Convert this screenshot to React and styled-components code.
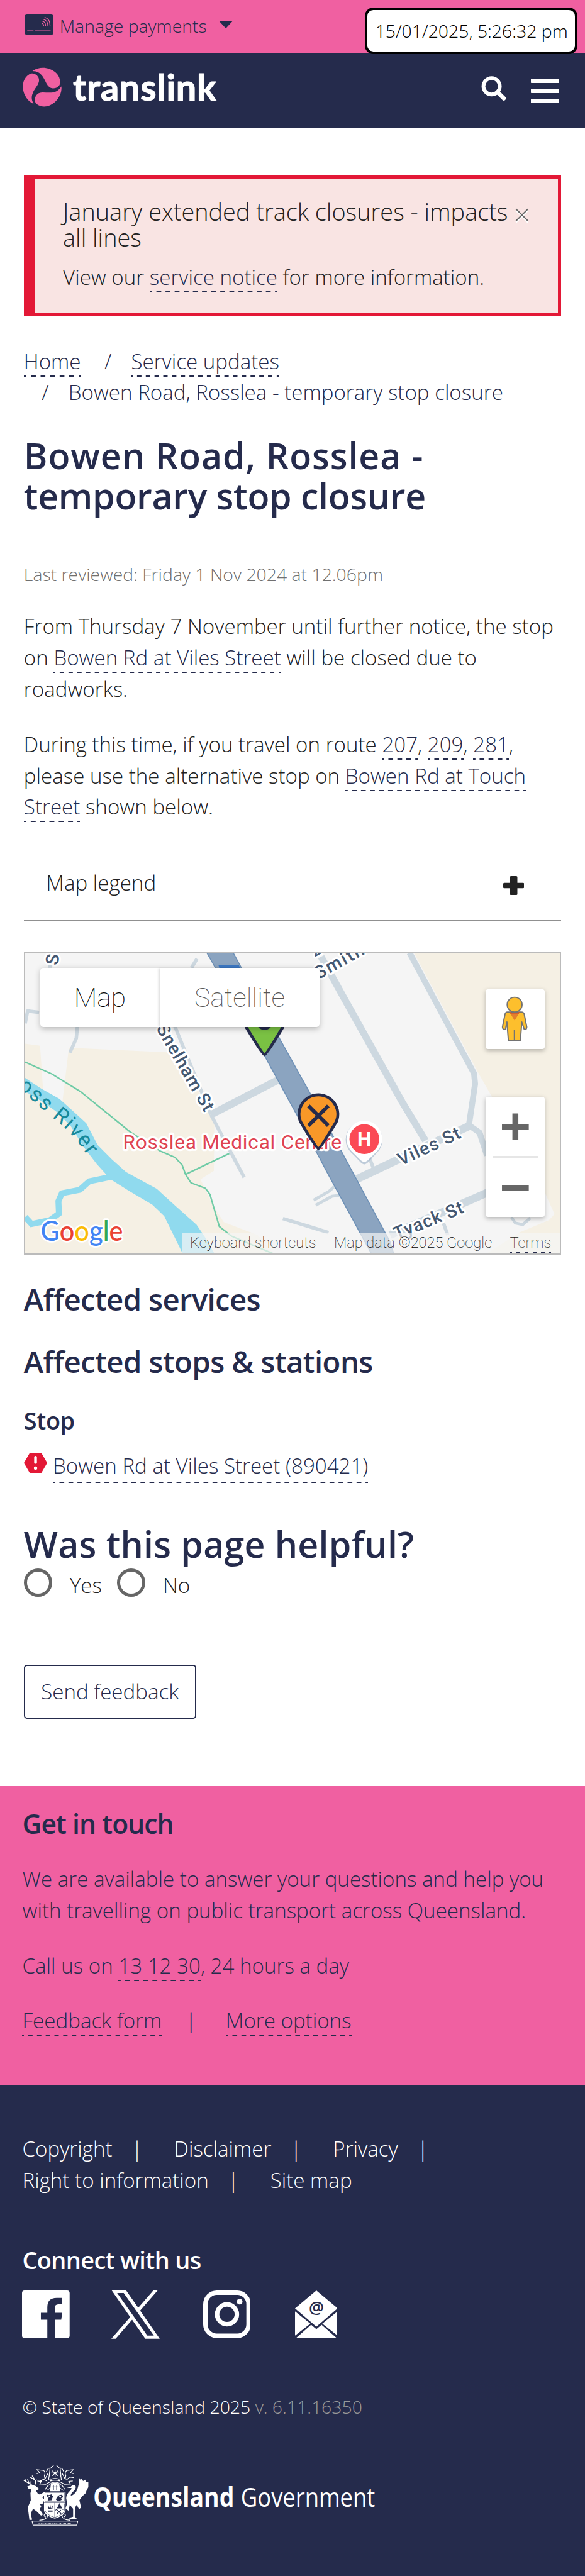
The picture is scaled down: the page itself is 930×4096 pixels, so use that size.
import React from "react";
import styled, { createGlobalStyle, css } from "styled-components";

const navy = "#252b4c";
const pink = "#f060a1";
const red = "#e31836";

/* 1rem is 100 units of a 1179-unit wide layout. */
const Global = createGlobalStyle`
  html { font-size: calc(100vw / 11.79); background: ${navy}; }
  body { margin: 0; font-family: "Open Sans", sans-serif; font-weight: 300; color: #222; }
  *, *::before, *::after { box-sizing: border-box; }
  p, h1, h2, h3, ul, ol { margin: 0; padding: 0; }
  ul, ol { list-style: none; }
  svg { display: block; flex: none; }
`;

const Page = styled.div`
  display: flex;
  flex-direction: column;
  min-height: 100vh;
  background: #fff;
  overflow: hidden;
`;

const bodyText = css`
  font-size: 0.42rem;
  line-height: 0.63rem;
`;

const Link = styled.a`
  color: ${navy};
  padding-bottom: 0.03rem;
  background-image: linear-gradient(90deg, ${navy} 0 25%, transparent 25% 75%, ${navy} 75%);
  background-size: 0.18rem 0.03rem;
  background-position: 0 100%;
  background-repeat: round no-repeat;
  -webkit-box-decoration-break: clone;
  box-decoration-break: clone;
`;

/* ---- top bar and header ---- */

const TopBar = styled.div`
  position: relative;
  display: flex;
  align-items: flex-start;
  height: 1.08rem;
  padding: 0.255rem 0 0 0.495rem;
  background: ${pink};
  color: ${navy};
  font-size: 0.36rem;
  line-height: 0.54rem;
`;

const CardIcon = styled.svg`
  width: 0.585rem;
  height: 0.41rem;
  margin: 0.036rem 0.12rem 0 0;
`;

const Caret = styled.svg`
  width: 0.28rem;
  height: 0.16rem;
  margin: 0.168rem 0 0 0.24rem;
`;

const Timestamp = styled.div`
  position: absolute;
  z-index: 2;
  top: 0.15rem;
  right: 0.15rem;
  padding: 0.15rem 0.145rem 0.155rem 0.155rem;
  border: 0.057rem solid #000;
  border-radius: 0.17rem;
  background: #fff;
  color: #000;
  white-space: nowrap;
`;

const Header = styled.header`
  display: flex;
  align-items: flex-start;
  height: 1.5rem;
  padding: 0 0.52rem 0 0.475rem;
  background: ${navy};
`;

const Logo = styled.svg`
  width: 4rem;
  height: 0.8rem;
  margin: 0.29rem auto 0 0;
  overflow: visible;
`;

const SearchIcon = styled.svg`
  width: 0.52rem;
  height: 0.5rem;
  margin: 0.46rem 0.485rem 0 0;
`;

const MenuIcon = styled.div`
  display: flex;
  flex-direction: column;
  gap: 0.105rem;
  width: 0.57rem;
  margin-top: 0.5rem;
`;

const MenuBar = styled.span`
  height: 0.098rem;
  border-radius: 0.01rem;
  background: #fff;
`;

/* ---- main column ---- */

const Main = styled.main`
  height: 33.43rem;
  padding: 0.96rem 0.48rem 0;
`;

const Alert = styled.section`
  display: flex;
  height: 2.82rem;
  padding: 0.42rem 0.58rem 0 0.56rem;
  border: 0.064rem solid ${red};
  border-left-width: 0.24rem;
  background: #f9e4e3;
  ${bodyText}
`;

const AlertBody = styled.div`
  flex: 1;
`;

const AlertTitle = styled.p`
  margin-bottom: 0.23rem;
  font-size: 0.48rem;
  line-height: 0.51rem;
`;

const CloseIcon = styled.svg`
  width: 0.3rem;
  height: 0.32rem;
  margin: 0.165rem 0 0 0;
`;

const Crumbs = styled.ol`
  display: flex;
  flex-wrap: wrap;
  margin-top: 0.61rem;
  color: ${navy};
  ${bodyText}
`;

const Crumb = styled.li`
  ${(p) =>
    p.$separated &&
    css`
      &::before {
        content: "/";
        margin: 0 0.395rem 0 ${p.$first ? "0.475rem" : "0.36rem"};
      }
    `}
`;

const Heading = styled.h2`
  margin-top: ${(p) => p.$top}rem;
  color: ${(p) => p.$color || navy};
  font-size: ${(p) => p.$size}rem;
  line-height: ${(p) => p.$line}rem;
  font-weight: 600;
  letter-spacing: ${(p) => p.$track || 0}em;
  white-space: nowrap;
`;

const HeadingLine = styled.span`
  display: block;
  letter-spacing: ${(p) => p.$track}em;
`;

const Reviewed = styled.p`
  margin-top: 0.895rem;
  color: #707070;
  font-size: 0.36rem;
  line-height: 0.54rem;
`;

const Paragraph = styled.p`
  margin-top: ${(p) => p.$top}rem;
  ${bodyText}
`;

const Legend = styled.div`
  display: flex;
  justify-content: space-between;
  margin-top: 0.455rem;
  height: 1.53rem;
  padding: 0.44rem 0.75rem 0 0.45rem;
  border-bottom: 0.03rem solid #909090;
  ${bodyText}
`;

const PlusIcon = styled.svg`
  width: 0.42rem;
  height: 0.38rem;
  margin-top: 0.18rem;
`;

/* ---- map ---- */

const MapFrame = styled.div`
  position: relative;
  height: 6.11rem;
  margin-top: 0.61rem;
  border: 0.03rem solid #bbb;
  overflow: hidden;
  font-family: Roboto, sans-serif;
  font-weight: 100;
`;

const MapCanvas = styled.svg`
  width: 100%;
  height: 100%;
  font-weight: 400;
`;

const MapTypes = styled.div`
  position: absolute;
  left: 0.3rem;
  top: 0.305rem;
  display: flex;
  height: 1.2rem;
  border-radius: 0.06rem;
  background: #fff;
  box-shadow: 0 0.03rem 0.12rem rgba(0, 0, 0, 0.25);
  font-size: 0.54rem;
  line-height: 1.2rem;
`;

const MapType = styled.span`
  width: ${(p) => p.$width}rem;
  text-align: center;
  color: ${(p) => (p.$active ? "#000" : "#565656")};
  & + & {
    box-shadow: -0.03rem 0 0.04rem -0.01rem rgba(0, 0, 0, 0.13);
  }
`;

const MapButton = styled.div`
  position: absolute;
  right: 0.3rem;
  top: ${(p) => p.$top}rem;
  display: flex;
  flex-direction: column;
  align-items: center;
  width: 1.2rem;
  height: ${(p) => p.$height}rem;
  border-radius: 0.05rem;
  background: #fff;
  box-shadow: 0 0.03rem 0.1rem rgba(0, 0, 0, 0.25);
`;

const Glyph = styled.svg`
  width: 1.2rem;
  height: 1.2rem;
`;

const ZoomRule = styled.span`
  width: 0.9rem;
  height: 0.03rem;
  background: #e6e6e6;
`;

const Attribution = styled.div`
  position: absolute;
  right: 0;
  bottom: 0;
  display: flex;
  width: 7.61rem;
  height: 0.42rem;
  padding: 0 0.175rem 0 0.155rem;
  justify-content: space-between;
  background: rgba(245, 245, 245, 0.7);
  color: #000;
  font-size: 0.3rem;
  line-height: 0.42rem;
`;

const Terms = styled(Link)`
  color: #222;
  height: 0.42rem;
  padding: 0;
`;

/* ---- stops and feedback ---- */

const StopRow = styled.p`
  display: flex;
  align-items: flex-start;
  margin-top: 0.327rem;
  ${bodyText}
`;

const StopIcon = styled.svg`
  width: 0.47rem;
  height: 0.41rem;
  margin: 0.05rem 0.115rem 0 0;
`;

const Radios = styled.div`
  display: flex;
  gap: 0.304rem;
  height: 2.04rem;
  margin-top: -0.02rem;
  ${bodyText}
`;

const RadioLabel = styled.label`
  display: flex;
  align-items: flex-start;
  gap: 0.356rem;
  padding-top: 0.125rem;
`;

const RadioDot = styled.span`
  width: 0.57rem;
  height: 0.57rem;
  margin-top: -0.03rem;
  border: 0.064rem solid #666;
  border-radius: 50%;
`;

const FeedbackButton = styled.button`
  display: block;
  width: 3.47rem;
  height: 1.08rem;
  padding: 0 0 0.01rem;
  border: 0.03rem solid ${navy};
  border-radius: 0.06rem;
  background: #fff;
  color: ${navy};
  font-family: inherit;
  font-weight: 300;
  ${bodyText}
`;

/* ---- contact band and footer ---- */

const Contact = styled.section`
  height: 6.03rem;
  padding: 0.445rem 0.45rem 0;
  background: ${pink};
  color: ${navy};
`;

const LinkRow = styled.div`
  display: flex;
  margin-top: 0.48rem;
  ${bodyText}
`;

const Divider = styled.span`
  margin: 0 0.585rem 0 0.475rem;
`;

const Footer = styled.footer`
  flex: 1;
  padding: 0.96rem 0.45rem 0;
  background: ${navy};
  color: #fff;
`;

const FooterLinks = styled.ul`
  display: flex;
  flex-wrap: wrap;
  ${bodyText}
`;

const FooterLink = styled.li`
  margin-right: 0.63rem;
  &:not(:last-child)::after {
    content: "|";
    margin-left: 0.385rem;
  }
`;

const Socials = styled.div`
  display: grid;
  grid-template-columns: 1.8rem 1.84rem 1.85rem auto;
  height: 1rem;
  margin-top: 0.315rem;
`;

const Social = styled.svg`
  width: ${(p) => p.$width}rem;
  height: ${(p) => p.$height}rem;
  margin-top: ${(p) => p.$top || 0}rem;
`;

const Copyright = styled.p`
  margin-top: 1.1rem;
  font-size: 0.36rem;
  line-height: 0.54rem;
`;

const Version = styled.span`
  color: #999;
`;

const Crest = styled.svg`
  width: 7.183rem;
  height: 1.267rem;
  margin-top: 0.86rem;
`;

const blade =
  "M55 19C90-6 130-3 155 5C192 17 222 45 223 85C223 110 205 124 180 124C140 120 140 80 112 45C100 30 85 20 55 19Z";

function BrandLogo() {
  return (
    <Logo viewBox="0 0 400 80" role="img">
      <g transform="scale(.3333)" fill={pink}>
        <path d={blade} />
        <path d={blade} transform="rotate(120 116 116)" />
        <path d={blade} transform="rotate(240 116 116)" />
      </g>
      <text
        x="100"
        y="66.5"
        fontFamily="Lato, sans-serif"
        fontWeight="700"
        fontSize="73"
        textLength="289"
        fill="#fff"
        stroke="#fff"
        strokeWidth="1.4"
        strokeLinejoin="round"
      >
        translink
      </text>
    </Logo>
  );
}

const road = { fill: "none", stroke: "#cdd8e0", strokeLinejoin: "round" };
const label = {
  fontWeight: 500,
  fontSize: 36,
  fill: "#445872",
  stroke: "#fff",
  strokeWidth: 8,
  strokeLinejoin: "round",
  paintOrder: "stroke",
};

function Pin({ x, y, fill, children }) {
  return (
    <g transform={`translate(${x} ${y})`}>
      <path
        d="M0 66C-4 66-30 22-36 12A39 39 0 1 1 36 12C30 22 4 66 0 66Z"
        fill={fill}
        stroke={navy}
        strokeWidth="6"
        strokeLinejoin="round"
      />
      {children}
    </g>
  );
}

function StreetMap() {
  return (
    <MapCanvas viewBox="0 0 1077 605" preserveAspectRatio="none" fontFamily="Roboto, sans-serif">
      <rect width="1077" height="605" fill="#f5f5f5" />
      <g fill="#f5f0e4">
        <path d="M783 0L911 239 940 290 1030 440 1047 484 1066 526 1055 538 995 563 930 605H1077V0Z" />
        <path d="M0 183L30 187 37 290 0 270Z" />
        <path d="M88 191L302 201 381 332 380 439 353 456 381 513 400 542 468 568 500 605H0V265L75 300Z" />
      </g>
      <path d="M0 252L32 273 69 294 88 311 123 343 146 387 175 416 203 441 265 475 302 509 345 547 362 572 381 605H317L280 530 256 507 212 481 172 456 144 425 118 391 92 349 62 319 32 298 0 279Z" fill="#90daee" />
      <path d="M172 451L149 456 129 460 110 477 74 484 67 500 68 525 50 538 13 546 0 532" fill="none" stroke="#90daee" strokeWidth="12" />
      <g fill="none" stroke="#6fcba6" strokeWidth="3">
        <path d="M0 220L54 244 111 279 212 361 272 399 302 412 316 427 323 446 334 463 363 474 372 486 391 551 415 570 450 585 498 605" />
        <path d="M323 446L411 404" />
      </g>
      <g {...road}>
        <path d="M596 8L647 100 759 300 806 378" strokeWidth="14" />
        <path d="M774 0L904 243 906 264 893 351" strokeWidth="12" />
        <path d="M889 351L898 350 915 362 930 408" strokeWidth="12" />
        <path d="M893 349L667 456" strokeWidth="16" />
        <path d="M509 256L374 326" strokeWidth="15" />
        <path d="M930 483L735 568" strokeWidth="16" />
        <path d="M374 326L441 452" strokeWidth="7" />
        <path d="M290 120L374 326" strokeWidth="7" />
        <path d="M50 0V30M335 30L346 12M106 140L103 172 90 201M0 142L5 117 28 120" strokeWidth="7" />
        <path d="M693 412L701 433M840 538L851 568" strokeWidth="7" />
        <path d="M624 469L612 480 581 498M634 488L618 490 585 508" strokeWidth="6" />
        <path d="M519 535L611 563" strokeWidth="7" />
        <path d="M979 532L987 544 1002 547 1017 534" strokeWidth="6" />
      </g>
      <path d="M366 0L482 207 549 330 607 440 674 563 697 605H742L735 582 636 398 576 287 512 172 419 0Z" fill="#8ba4c0" stroke="#6d90b6" strokeWidth="2" />
      <path d="M389 24H430L434 34H392Z" fill="#3c78c4" />

      <text {...label} transform="translate(66 26) rotate(-82)">S</text>
      <text {...label} transform="translate(583 9) rotate(-30)" fontSize="30">2</text>
      <text {...label} transform="translate(591 54) rotate(-29)" textLength="108">Smith</text>
      <text {...label} transform="translate(263 152) rotate(60)" textLength="196">Snelham St</text>
      <text {...label} transform="translate(757 429) rotate(-25)" textLength="135">Viles St</text>
      <text {...label} transform="translate(748 578) rotate(-22)" textLength="148">Tyack St</text>
      <path id="river" d="M-38 252C-16 272 10 292 36 316C80 354 102 362 150 450" fill="none" />
      <text fontSize="43" fill="#16899b" letterSpacing="3">
        <textPath href="#river">Ross River</textPath>
      </text>
      <text x="197" y="395" fontSize="40" fill="#df4352" stroke="#fff" strokeWidth="8" strokeLinejoin="round" paintOrder="stroke" textLength="440">
        Rosslea Medical Centre
      </text>

      <path d="M683 426C677 426 670 415 656 402A37 37 0 1 1 709 402C696 415 689 426 683 426Z" fill="#7d98b8" opacity=".45" />
      <path d="M683 421C677 421 670 411 657 399A36 36 0 1 1 709 399C696 411 689 421 683 421Z" fill="#fff" />
      <circle cx="683" cy="375" r="30" fill="#fb4a55" />
      <text x="683" y="389" fontSize="40" fontWeight="700" fill="#fff" textAnchor="middle">H</text>

      <Pin x={482} y={139} fill="#7ac143">
        <circle r="13" fill="none" stroke={navy} strokeWidth="7" />
      </Pin>
      <Pin x={590.5} y={328} fill="#f99828">
        <path d="M-20-20L20 20M20-20L-20 20" stroke={navy} strokeWidth="7.5" />
      </Pin>

      <text x="31" y="580" fontFamily="Lato, sans-serif" fontWeight="500" fontSize="56" textLength="166" stroke="#fff" strokeWidth="7" strokeLinejoin="round" paintOrder="stroke" lengthAdjust="spacingAndGlyphs">
        <tspan fill="#4285f4">G</tspan>
        <tspan fill="#ea4335">o</tspan>
        <tspan fill="#fbbc04">o</tspan>
        <tspan fill="#4285f4">g</tspan>
        <tspan fill="#34a853">l</tspan>
        <tspan fill="#ea4335">e</tspan>
      </text>
    </MapCanvas>
  );
}

function Pegman() {
  return (
    <Glyph viewBox="0 0 120 120">
      <g fill="#fdbf2d" stroke="#737373" strokeWidth="2.5" strokeLinejoin="round">
        <path d="M44 46H72Q77 46 78 51L83 76Q83 82 78 81L73 66 70 104H46L43 66 40 81Q34 82 34 76L39 51Q40 46 44 46Z" />
        <path d="M58 104V82" />
        <circle cx="58.5" cy="31" r="15" />
      </g>
      <path d="M48 46Q58 50 69 46L58.5 63Z" fill="#e37f2d" />
      <path d="M48 45Q58 51 69 45L67 49H50Z" fill="#d3552c" />
    </Glyph>
  );
}

function Arms() {
  return (
    <g fill="#fff">
      {/* stag */}
      <path d="M76 240L98 231 124 234 145 250 144 260 130 264 140 282 152 288 178 274 181 292 168 306 180 318 172 342 150 346 162 358 152 378 172 408 160 416 134 390 112 374 98 402 106 440 90 442 84 396 80 366 98 322 96 280 102 256 84 252Z" />
      <path d="M112 234L86 220 56 202M74 214L60 192M88 220L78 196M98 226L100 206M122 234L128 212 116 188M126 210L132 196M122 200L94 182M116 190L106 174" fill="none" stroke="#fff" strokeWidth="5" />
      {/* brolga */}
      <path d="M316 248L340 241Q350 225 366 231 376 246 360 264 338 284 340 294 356 294 374 268 392 232 390 186L400 202 406 190 414 206 428 198 430 212 446 210 446 244 436 262 430 280 408 300 392 322 402 366 390 378 376 350 366 366 364 420 376 434 328 440 334 428 354 422 354 374 334 350 326 386 308 372 318 342 312 310Q312 286 336 264 350 250 342 248Z" />
      {/* mantling and crest */}
      <g fill="none" stroke="#fff" strokeWidth="4.5">
        <path d="M236 112L214 132 210 170 218 206M254 112L276 132 280 170 272 206M192 150L204 130 216 128M298 150L286 130 274 128" />
        <path d="M134 162L152 156 136 138 176 142Q190 156 180 174L184 194 202 160 208 200M356 162L338 156 354 138 316 142Q300 156 310 174L306 194 288 160 282 200" />
        <path d="M138 206L162 208 152 224 188 226 214 212M146 212L174 196 196 206M352 206L328 208 338 224 302 226 276 212M360 186L334 182 318 196 296 190" />
        <path d="M184 258L202 234 216 226M194 264L214 250M306 258L288 234 274 226M296 264L276 250" />
        <path d="M222 158H268M245 138V180M228 144L262 174M262 144L228 174M220 196Q245 186 270 196M216 206Q245 196 274 206M218 220Q245 208 272 220" />
      </g>
      <path d="M220 222Q245 212 270 222L276 268H214Z" />
      <path d="M236 232V260M228 242H244M254 232V260M246 242H262" stroke={navy} strokeWidth="3" />
      {/* shield */}
      <path d="M178 271H308V333H178Z" />
      <path d="M184 276H302V329H184Z" fill="none" stroke={navy} strokeWidth="2" />
      <path d="M194 286Q206 296 222 286L232 300 224 322 200 324 206 306 194 298ZM250 318Q262 286 288 290 300 306 280 312 292 320 276 324H256Z" fill={navy} />
      <circle cx="211" cy="300" r="5" />
      <circle cx="276" cy="301" r="6" />
      <path d="M178 338H308V384Q302 416 243 434 184 416 178 384Z" />
      <path d="M243 338V430M184 342V384Q190 410 243 427 296 410 302 384V342" fill="none" stroke={navy} strokeWidth="2.5" />
      <path d="M202 352L214 374 216 348 220 374 232 352 228 378H206ZM204 384H230V392H204ZM256 372L272 340 288 372ZM246 386Q266 368 298 382L290 376H250Z" fill={navy} />
      <path d="M258 382L282 404M280 382L256 404" stroke={navy} strokeWidth="5" />
      {/* motto scroll */}
      <g fill="none" stroke="#fff" strokeWidth="4.5">
        <path d="M106 449H382L376 473H112Z" />
        <path d="M150 444Q196 440 200 416 194 400 180 408 174 420 190 424M336 444Q290 440 286 416 292 400 306 408 312 420 296 424" />
        <path d="M146 462H344" strokeWidth="9" strokeDasharray="4 4 2 4 6 3" opacity=".75" />
      </g>
    </g>
  );
}

export default function App() {
  return (
    <Page>
      <Global />
      <TopBar>
        <CardIcon viewBox="0 0 58.5 41">
          <rect width="58.5" height="41" rx="5" fill={navy} />
          <g fill="none" stroke={pink} strokeWidth="1.6" strokeLinecap="round">
            <path d="M6 33.3H17.5M21 33.3H52" strokeWidth="2" />
            <path d="M35 17.5Q38.5 18.5 38.5 23M36 13.5Q42.5 15 42.5 23M38 9.6Q47 12 47 23M41 5.8Q51.5 9 51.5 23" />
          </g>
        </CardIcon>
        Manage payments
        <Caret viewBox="0 0 28 16">
          <path d="M2 1H26L14 14Z" fill={navy} stroke={navy} strokeWidth="2" strokeLinejoin="round" />
        </Caret>
        <Timestamp>15/01/2025, 5:26:32 pm</Timestamp>
      </TopBar>

      <Header>
        <BrandLogo />
        <SearchIcon viewBox="0 0 52 50">
          <circle cx="21" cy="20.5" r="16.5" fill="none" stroke="#fff" strokeWidth="7.5" />
          <path d="M33 32.5L45.5 45" stroke="#fff" strokeWidth="8.5" strokeLinecap="round" />
        </SearchIcon>
        <MenuIcon>
          <MenuBar />
          <MenuBar />
          <MenuBar />
        </MenuIcon>
      </Header>

      <Main>
        <Alert>
          <AlertBody>
            <AlertTitle>January extended track closures - impacts all lines</AlertTitle>
            <p>
              View our <Link>service notice</Link> for more information.
            </p>
          </AlertBody>
          <CloseIcon viewBox="0 0 30 32">
            <path d="M3 6L27 30M27 6L3 30" stroke="#fff" strokeWidth="3" />
            <path d="M3 3L27 27M27 3L3 27" stroke="#666" strokeWidth="2.6" />
          </CloseIcon>
        </Alert>

        <Crumbs>
          <Crumb>
            <Link>Home</Link>
          </Crumb>
          <Crumb $separated $first>
            <Link>Service updates</Link>
          </Crumb>
          <Crumb $separated>Bowen Road, Rosslea - temporary stop closure</Crumb>
        </Crumbs>

        <Heading as="h1" $top={0.56} $size={0.725} $line={0.81}>
          <HeadingLine $track={0.016}>Bowen Road, Rosslea -</HeadingLine>
          <HeadingLine $track={-0.005}>temporary stop closure</HeadingLine>
        </Heading>

        <Reviewed>Last reviewed: Friday 1 Nov 2024 at 12.06pm</Reviewed>

        <Paragraph $top={0.47}>
          From Thursday 7 November until further notice, the stop on <Link>Bowen Rd at Viles Street</Link> will be
          closed due to roadworks.
        </Paragraph>
        <Paragraph $top={0.49}>
          During this time, if you travel on route <Link>207</Link>, <Link>209</Link>, <Link>281</Link>, please use
          the alternative stop on <Link>Bowen Rd at Touch Street</Link> shown below.
        </Paragraph>

        <Legend>
          Map legend
          <PlusIcon viewBox="0 0 42 38">
            <rect x="13.5" width="15" height="38" rx="2" fill="#222" />
            <rect y="13.5" width="42" height="11" rx="2" fill="#222" />
          </PlusIcon>
        </Legend>

        <MapFrame>
          <StreetMap />
          <MapTypes>
            <MapType $active $width={2.42}>Map</MapType>
            <MapType $width={3.21}>Satellite</MapType>
          </MapTypes>
          <MapButton $top={0.74} $height={1.2}>
            <Pegman />
          </MapButton>
          <MapButton $top={2.9} $height={2.43}>
            <Glyph viewBox="0 0 120 120">
              <path d="M33 60.5H87M60 33.5V87.5" stroke="#666" strokeWidth="12" />
            </Glyph>
            <ZoomRule />
            <Glyph viewBox="0 0 120 120">
              <path d="M33 60.5H87" stroke="#666" strokeWidth="12" />
            </Glyph>
          </MapButton>
          <Attribution>
            <span>Keyboard shortcuts</span>
            <span>Map data ©2025 Google</span>
            <Terms>Terms</Terms>
          </Attribution>
        </MapFrame>

        <Heading $top={0.57} $size={0.6} $line={0.66} $track={-0.0135}>Affected services</Heading>
        <Heading $top={0.604} $size={0.6} $line={0.66} $track={-0.0125}>Affected stops &amp; stations</Heading>
        <Heading as="h3" $top={0.588} $size={0.48} $line={0.54} $track={-0.01}>Stop</Heading>
        <StopRow>
          <StopIcon viewBox="0 0 47 41">
            <path d="M12 0H35L47 20.5 35 41H12L0 20.5Z" fill={red} />
            <path d="M23.5 9V19.5" stroke="#fff" strokeWidth="5.5" strokeLinecap="round" />
            <circle cx="23.5" cy="31" r="3.4" fill="#fff" />
          </StopIcon>
          <Link>Bowen Rd at Viles Street (890421)</Link>
        </StopRow>

        <Heading $top={0.837} $size={0.725} $line={0.81} $track={0.004}>Was this page helpful?</Heading>
        <Radios>
          <RadioLabel>
            <RadioDot />
            Yes
          </RadioLabel>
          <RadioLabel>
            <RadioDot />
            No
          </RadioLabel>
        </Radios>
        <FeedbackButton>Send feedback</FeedbackButton>
      </Main>

      <Contact>
        <Heading as="h3" $top={0} $size={0.54} $line={0.6} $track={-0.022}>Get in touch</Heading>
        <Paragraph $top={0.513}>
          We are available to answer your questions and help you with travelling on public transport across
          Queensland.
        </Paragraph>
        <Paragraph $top={0.482}>
          Call us on <Link>13 12 30</Link>, 24 hours a day
        </Paragraph>
        <LinkRow>
          <span>
            <Link>Feedback form</Link>
          </span>
          <Divider>|</Divider>
          <span>
            <Link>More options</Link>
          </span>
        </LinkRow>
      </Contact>

      <Footer>
        <FooterLinks>
          <FooterLink>Copyright</FooterLink>
          <FooterLink>Disclaimer</FooterLink>
          <FooterLink>Privacy</FooterLink>
          <FooterLink>Right to information</FooterLink>
          <FooterLink>Site map</FooterLink>
        </FooterLinks>
        <Heading as="h3" $top={1.042} $size={0.48} $line={0.54} $track={-0.0165} $color="#fff">
          Connect with us
        </Heading>
        <Socials>
          <Social viewBox="0 0 96 96" $width={0.96} $height={0.96} $top={0.01}>
            <path
              d="M5 0H91A5 5 0 0 1 96 5V91A5 5 0 0 1 91 96H66V59H79L81 45H66V36Q66 28 73 28H81V15H70Q51 15 51 34V45H38V59H51V96H5A5 5 0 0 1 0 91V5A5 5 0 0 1 5 0Z"
              fill="#fff"
            />
          </Social>
          <Social viewBox="0 0 1200 1227" $width={0.975} $height={0.985} preserveAspectRatio="none">
            <path
              fill="#fff"
              d="M714.163 519.284L1160.890 0H1055.030L667.137 450.887L357.328 0H0L468.492 681.821L0 1226.370H105.866L515.491 750.218L842.672 1226.370H1200L714.137 519.284H714.163ZM569.165 687.828L521.697 619.934L144.011 79.694H306.615L611.412 515.685L658.880 583.579L1055.080 1150.300H892.476L569.165 687.854V687.828Z"
            />
          </Social>
          <Social viewBox="0 0 96 96" $width={0.96} $height={0.96} $top={0.01}>
            <rect x="4.5" y="4.5" width="87" height="87" rx="23" fill="none" stroke="#fff" strokeWidth="9" />
            <circle cx="48" cy="48" r="20" fill="none" stroke="#fff" strokeWidth="9" />
            <circle cx="73.5" cy="22.5" r="5.8" fill="#fff" />
          </Social>
          <Social viewBox="0 0 86 96" $width={0.86} $height={0.96} $top={0.01}>
            <g fill="#fff">
              <path d="M43 0L86 36 43 73 0 36Z" />
              <path d="M0 42L31 67 0 91ZM86 42L55 67 86 91Z" />
              <path d="M3 95L32.5 69 43 78 53.5 69 83 95Q82 96 80 96H6Q4 96 3 95Z" />
            </g>
            <text x="43" y="47" textAnchor="middle" fontFamily="Open Sans" fontWeight="600" fontSize="34" fill={navy}>
              @
            </text>
          </Social>
        </Socials>
        <Copyright>
          © State of Queensland 2025 <Version>v. 6.11.16350</Version>
        </Copyright>
        <Crest viewBox="45 100 2155 380">
          <Arms />
          <text x="476" y="363" fontFamily="Open Sans" fontWeight="700" fontSize="160" textLength="852" lengthAdjust="spacingAndGlyphs" fill="#fff">
            Queensland
          </text>
          <text x="1368" y="363" fontFamily="Open Sans" fontWeight="400" fontSize="160" textLength="812" lengthAdjust="spacingAndGlyphs" fill="#fff">
            Government
          </text>
        </Crest>
      </Footer>
    </Page>
  );
}
